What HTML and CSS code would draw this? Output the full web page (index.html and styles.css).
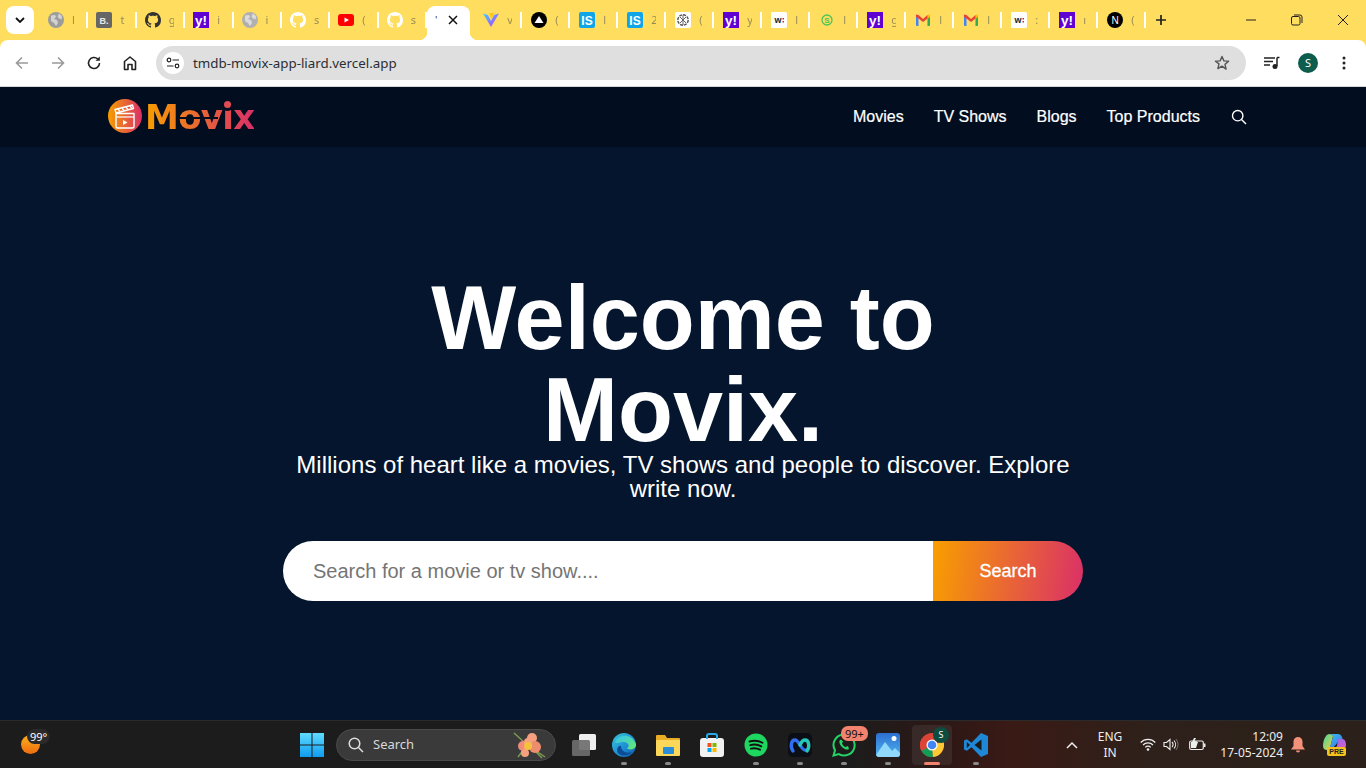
FILE: index.html
```html
<!DOCTYPE html>
<html lang="en">
<head>
<meta charset="utf-8">
<title>Movix</title>
<link rel="stylesheet" href="styles.css">
</head>
<body>
<svg class="defs" width="0" height="0" aria-hidden="true">
  <defs>
    <linearGradient id="logoGrad" x1="0" y1="0" x2="1" y2="0"><stop offset="0" stop-color="#f89e00"/><stop offset="1" stop-color="#da2f68"/></linearGradient>
    <linearGradient id="viteGrad" x1="0" y1="0" x2="1" y2="1"><stop offset="0" stop-color="#41d1ff"/><stop offset="1" stop-color="#bd34fe"/></linearGradient>
    <linearGradient id="edgeGrad" x1="0" y1="0" x2="1" y2="1"><stop offset="0" stop-color="#37c6d0"/><stop offset=".55" stop-color="#1f8fd8"/><stop offset="1" stop-color="#0c59a4"/></linearGradient>
    <linearGradient id="edgeGreen" x1="0" y1="0" x2="1" y2="1"><stop offset="0" stop-color="#35c1f1"/><stop offset="1" stop-color="#66eb6e"/></linearGradient>
    <linearGradient id="winGrad" x1="0" y1="0" x2="0" y2="1"><stop offset="0" stop-color="#5fdcff"/><stop offset="1" stop-color="#0f9bf0"/></linearGradient>
    <linearGradient id="sunGrad" x1="0" y1="0" x2="0" y2="1"><stop offset="0" stop-color="#fbb01e"/><stop offset="1" stop-color="#ee6c10"/></linearGradient>
    <linearGradient id="photoGrad" x1="0" y1="0" x2="0" y2="1"><stop offset="0" stop-color="#2c6fd0"/><stop offset="1" stop-color="#4fb3ef"/></linearGradient>
    <linearGradient id="copGreen" x1="0" y1="0" x2="1" y2="1"><stop offset="0" stop-color="#41d7a0"/><stop offset="1" stop-color="#f0d040"/></linearGradient>
    <linearGradient id="copBlue" x1="0" y1="0" x2="1" y2="1"><stop offset="0" stop-color="#3bc0e8"/><stop offset="1" stop-color="#3a6ff0"/></linearGradient>
    <linearGradient id="copPink" x1="0" y1="0" x2="1" y2="1"><stop offset="0" stop-color="#8a6cf0"/><stop offset="1" stop-color="#e05cc8"/></linearGradient>
    <symbol id="i-globe" viewBox="0 0 16 16"><circle cx="8" cy="8" r="8" fill="currentColor"/><path d="M3 3.500 7 3l1 2-2 2 3 1 1 3-2 3-2-3-3-2zM11 1.500l3 2.500-.5 3.500-2.500-1-1.500-2z" fill="#fff" opacity=".55"/></symbol>
    <symbol id="i-boot" viewBox="0 0 16 16"><rect width="16" height="16" rx="2" fill="#666"/><text x="8" y="11.500" class="ic-text" font-size="9" fill="#e8e8e8">B.</text></symbol>
    <symbol id="i-gh" viewBox="0 0 16 16"><path fill="currentColor" d="M8 0C3.58 0 0 3.58 0 8c0 3.54 2.29 6.530 5.470 7.590.4.07.55-.17.55-.38 0-.19-.01-.82-.01-1.490-2.010.37-2.530-.49-2.690-.94-.09-.23-.48-.94-.82-1.130-.28-.15-.68-.52-.01-.53.63-.01 1.080.58 1.230.82.72 1.210 1.870.87 2.330.66.07-.52.28-.87.51-1.070-1.780-.2-3.640-.89-3.640-3.950 0-.87.31-1.590.82-2.150-.08-.2-.36-1.020.08-2.120 0 0 .67-.21 2.200.82.64-.18 1.320-.27 2-.27.68 0 1.360.09 2 .27 1.530-1.040 2.200-.82 2.200-.82.44 1.100.16 1.920.08 2.120.51.56.82 1.270.82 2.150 0 3.070-1.870 3.750-3.650 3.950.29.25.54.73.54 1.480 0 1.070-.01 1.930-.01 2.200 0 .21.15.46.55.38A8.013 8.013 0 0016 8c0-4.420-3.580-8-8-8z"/></symbol>
    <symbol id="i-yahoo" viewBox="0 0 16 16"><rect width="16" height="16" fill="#5f01d1"/><text x="8" y="12.500" class="ic-text" font-size="13.500" fill="#fff">y!</text></symbol>
    <symbol id="i-yt" viewBox="0 0 16 16"><rect y="2" width="16" height="12" rx="3" fill="#f00"/><path d="M6.500 5.500v5L11 8z" fill="#fff"/></symbol>
    <symbol id="i-vite" viewBox="0 0 16 16"><path d="M0 1.500 8 15 16 1.500 11 3 8 9 5 3z" fill="url(#viteGrad)"/><path d="M6 1h5L8.500 7z" fill="#ffc517"/></symbol>
    <symbol id="i-tri" viewBox="0 0 16 16"><circle cx="8" cy="8" r="8" fill="#000"/><path d="M8 4l4.500 7h-9z" fill="#fff"/></symbol>
    <symbol id="i-is" viewBox="0 0 16 16"><rect width="16" height="16" rx="2" fill="#0ea5e9"/><text x="8" y="12.500" class="ic-text" font-size="12" fill="#fff">IS</text></symbol>
    <symbol id="i-ai" viewBox="0 0 16 16"><rect width="16" height="16" rx="2" fill="#fff"/><circle cx="8" cy="8" r="5.200" fill="none" stroke="#555" stroke-width="1.400" stroke-dasharray="3 1"/><path d="M5 5l6 6M11 5l-6 6M8 3v10" stroke="#666" stroke-width="1"/></symbol>
    <symbol id="i-w" viewBox="0 0 16 16"><rect width="16" height="16" rx="1.500" fill="#fff"/><text x="7" y="11" class="ic-text" font-size="9" fill="#222">w</text><rect x="11.500" y="6" width="1.500" height="1.500" fill="#d22"/><rect x="11.500" y="9" width="1.500" height="1.500" fill="#d22"/></symbol>
    <symbol id="i-s" viewBox="0 0 16 16"><circle cx="8" cy="8" r="5" fill="none" stroke="#4cc35a" stroke-width="1.300"/><text x="8" y="11" class="ic-text" font-size="8" fill="#4cc35a">S</text></symbol>
    <symbol id="i-gmail" viewBox="0 0 16 16"><path d="M1 14V4l2.500 2v8H2a1 1 0 0 1-1-1z" fill="#4285f4"/><path d="M12.500 14V6L15 4v9a1 1 0 0 1-1 1z" fill="#34a853"/><path d="M12.500 3 15 2.500V5l-2.500 2z" fill="#fbbc04"/><path d="M1 2.500 3.500 3 8 7l4.500-4v3.500L8 10 3.500 6.500 1 5z" fill="#ea4335"/></symbol>
    <symbol id="i-next" viewBox="0 0 16 16"><circle cx="8" cy="8" r="8" fill="#000"/><text x="8" y="11.500" class="ic-thin" font-size="10" fill="#fff">N</text></symbol>
  </defs>
</svg>

<div class="browser">
  <div class="tabstrip">
    <button class="tabsearch"><svg width="10" height="6" viewBox="0 0 10 6"><path d="M1 1l4 4 4-4" fill="none" stroke="#111" stroke-width="1.800"/></svg></button>
    <div class="tabs tabs-first">
      <div class="tab"><svg class="fav gray-a"><use href="#i-globe"/></svg><span class="clip">l</span></div>
      <div class="tab"><svg class="fav"><use href="#i-boot"/></svg><span class="clip">t</span></div>
      <div class="tab"><svg class="fav dark"><use href="#i-gh"/></svg><span class="clip">g</span></div>
      <div class="tab"><svg class="fav"><use href="#i-yahoo"/></svg><span class="clip">i</span></div>
      <div class="tab"><svg class="fav gray-b"><use href="#i-globe"/></svg><span class="clip">i</span></div>
      <div class="tab"><svg class="fav white"><use href="#i-gh"/></svg><span class="clip">s</span></div>
      <div class="tab"><svg class="fav"><use href="#i-yt"/></svg><span class="clip">(</span></div>
      <div class="tab"><svg class="fav white"><use href="#i-gh"/></svg><span class="clip">s</span></div>
    </div>
    <div class="tab-active"><span class="active-title">'</span><svg class="tabclose" width="10" height="10" viewBox="0 0 10 10"><path d="M1 1l8 8M9 1l-8 8" stroke="#111" stroke-width="1.500"/></svg></div>
    <div class="tabs tabs-second">
      <div class="tab"><svg class="fav"><use href="#i-vite"/></svg><span class="clip">v</span></div>
      <div class="tab"><svg class="fav"><use href="#i-tri"/></svg><span class="clip">(</span></div>
      <div class="tab"><svg class="fav"><use href="#i-is"/></svg><span class="clip">l</span></div>
      <div class="tab"><svg class="fav"><use href="#i-is"/></svg><span class="clip">2</span></div>
      <div class="tab"><svg class="fav"><use href="#i-ai"/></svg><span class="clip">(</span></div>
      <div class="tab"><svg class="fav"><use href="#i-yahoo"/></svg><span class="clip">y</span></div>
      <div class="tab"><svg class="fav"><use href="#i-w"/></svg><span class="clip">l</span></div>
      <div class="tab"><svg class="fav"><use href="#i-s"/></svg><span class="clip">l</span></div>
      <div class="tab"><svg class="fav"><use href="#i-yahoo"/></svg><span class="clip">g</span></div>
      <div class="tab"><svg class="fav"><use href="#i-gmail"/></svg><span class="clip">l</span></div>
      <div class="tab"><svg class="fav"><use href="#i-gmail"/></svg><span class="clip">l</span></div>
      <div class="tab"><svg class="fav"><use href="#i-w"/></svg><span class="clip">:</span></div>
      <div class="tab"><svg class="fav"><use href="#i-yahoo"/></svg><span class="clip">ı</span></div>
      <div class="tab"><svg class="fav"><use href="#i-next"/></svg><span class="clip">(</span></div>
    </div>
    <button class="newtab"><svg width="12" height="12" viewBox="0 0 12 12"><path d="M6 1v10M1 6h10" stroke="#222" stroke-width="1.700"/></svg></button>
    <div class="winctrls">
      <span class="winbtn"><svg width="12" height="12" viewBox="0 0 12 12"><path d="M1 6h10" stroke="#222"/></svg></span>
      <span class="winbtn"><svg width="12" height="12" viewBox="0 0 12 12"><rect x=".5" y="2.500" width="8.500" height="8.500" rx="1.500" fill="none" stroke="#222"/><path d="M3 1h6a2 2 0 0 1 2 2v6" fill="none" stroke="#222"/></svg></span>
      <span class="winbtn"><svg width="12" height="12" viewBox="0 0 12 12"><path d="M1 1l10 10M11 1L1 11" stroke="#222"/></svg></span>
    </div>
  </div>

  <div class="toolbar">
    <span class="toolbtn"><svg width="16" height="16" viewBox="0 0 16 16"><path d="M14 8H2.500M8 2.500 2.500 8 8 13.500" fill="none" stroke="#9a9a9a" stroke-width="1.600"/></svg></span>
    <span class="toolbtn"><svg width="16" height="16" viewBox="0 0 16 16"><path d="M2 8h11.500M8 2.500 13.500 8 8 13.500" fill="none" stroke="#9a9a9a" stroke-width="1.600"/></svg></span>
    <span class="toolbtn"><svg width="16" height="16" viewBox="0 0 16 16"><path d="M13.500 8A5.500 5.500 0 1 1 11.800 4" fill="none" stroke="#222" stroke-width="1.600"/><path d="M13.800 1.500v4.300H9.500z" fill="#222"/></svg></span>
    <span class="toolbtn"><svg width="16" height="16" viewBox="0 0 16 16"><path d="M2.500 14.500V6.500L8 2l5.500 4.500v8H10v-5H6v5z" fill="none" stroke="#222" stroke-width="1.600" stroke-linejoin="round"/></svg></span>
    <div class="omnibox">
      <span class="siteinfo"><svg width="14" height="12" viewBox="0 0 14 12"><circle cx="3" cy="3" r="1.800" fill="none" stroke="#222" stroke-width="1.200"/><path d="M6.500 3H13M1 9h6.500" stroke="#222" stroke-width="1.200"/><circle cx="11" cy="9" r="1.800" fill="none" stroke="#222" stroke-width="1.200"/></svg></span>
      <span class="url">tmdb-movix-app-liard.vercel.app</span>
      <svg class="star" width="16" height="16" viewBox="0 0 16 16"><path d="M8 1.500l1.900 4.400 4.700.4-3.600 3.100 1.100 4.700L8 11.100l-4.100 2.500L5 8.900 1.400 6.300l4.700-.4z" fill="none" stroke="#555" stroke-width="1.400" stroke-linejoin="round"/></svg>
    </div>
    <div class="toolright">
      <span class="toolbtn"><svg width="16" height="14" viewBox="0 0 16 14"><path d="M0 2h11M0 5.500h9M0 9h6" stroke="#222" stroke-width="1.500"/><path d="M13 1.500h2.500M13 1.500V10" stroke="#222" stroke-width="1.500"/><circle cx="11" cy="10.500" r="2.500" fill="#222"/></svg></span>
      <span class="toolbtn"><span class="avatar">S</span></span>
      <span class="toolbtn"><svg width="4" height="14" viewBox="0 0 4 14"><circle cx="2" cy="2" r="1.500" fill="#222"/><circle cx="2" cy="7" r="1.500" fill="#222"/><circle cx="2" cy="12" r="1.500" fill="#222"/></svg></span>
    </div>
  </div>

  <main class="page">
    <header class="site-header">
      <div class="site-inner">
        <a class="brand">
          <svg class="brand-mark" width="34" height="34" viewBox="0 0 34 34">
            <circle cx="17" cy="17" r="17" fill="url(#logoGrad)"/>
            <path d="M7 10.500 24.500 6l1 3.500L8 14zM8 14.500h18v13a1.500 1.500 0 0 1-1.500 1.500h-15A1.500 1.500 0 0 1 8 27.500z" fill="none" stroke="#fff" stroke-width="1.400" stroke-linejoin="round"/>
            <path d="M10 10l2 2.500M14 9l2 2.500M18 8l2 2.500M22 7l2 2.500" stroke="#fff" stroke-width="1.400"/>
            <path d="M8 18h18" stroke="#fff" stroke-width="1.200"/>
            <path d="M15 21v5l4.500-2.500z" fill="#fff"/>
          </svg>
          <span class="brand-word">Movix</span>
        </a>
        <nav class="site-nav">
          <a class="nav-link">Movies</a>
          <a class="nav-link">TV Shows</a>
          <a class="nav-link">Blogs</a>
          <a class="nav-link">Top Products</a>
          <a class="nav-link nav-search"><svg width="16" height="16" viewBox="0 0 16 16"><circle cx="6.700" cy="6.700" r="5.200" fill="none" stroke="#fff" stroke-width="1.400"/><path d="M10.500 10.500 15 15" stroke="#fff" stroke-width="1.400"/></svg></a>
        </nav>
      </div>
    </header>
    <section class="hero">
      <h1 class="hero-title">Welcome to<br>Movix.</h1>
      <p class="hero-sub">Millions of heart like a movies, TV shows and people to discover. Explore write now.</p>
      <div class="hero-search">
        <span class="hero-input">Search for a movie or tv show....</span>
        <button class="hero-btn">Search</button>
      </div>
    </section>
  </main>

  <footer class="taskbar">
    <div class="tb-left">
      <span class="weather">
        <svg width="19" height="19" viewBox="0 0 19 19"><circle cx="9.500" cy="9.500" r="9.500" fill="url(#sunGrad)"/></svg>
        <span class="temp">99°</span>
      </span>
    </div>
    <div class="tb-center">
      <span class="tb-start"><svg width="24" height="24" viewBox="0 0 24 24"><path d="M0 0h11.500v11.500H0zM12.500 0H24v11.500H12.500zM0 12.500h11.500V24H0zM12.500 12.500H24V24H12.500z" fill="url(#winGrad)"/></svg></span>
      <div class="tb-search">
        <svg width="16" height="16" viewBox="0 0 16 16"><circle cx="6.500" cy="6.500" r="5.300" fill="none" stroke="#ddd" stroke-width="1.500"/><path d="M10.500 10.500 15 15" stroke="#ddd" stroke-width="1.500"/></svg>
        <span class="tb-search-text">Search</span>
        <svg class="tb-flowers" width="34" height="28" viewBox="0 0 34 28"><path d="M2 2l10 9M33 26 20 17M30 27l-8-8M6 26l6-8" stroke="#7c9a52" stroke-width="1.500"/><circle cx="20" cy="7" r="5" fill="#f6a07f"/><circle cx="11" cy="15" r="5" fill="#f08a7a"/><circle cx="23" cy="16" r="6" fill="#ee8c6e"/><circle cx="13" cy="22" r="4" fill="#f6a07f"/><circle cx="16" cy="11" r="4" fill="#f6a07f"/><circle cx="16" cy="15" r="4" fill="#f5c23d"/></svg>
      </div>
      <div class="tb-apps">
        <span class="app app-task"><svg width="26" height="24" viewBox="0 0 26 24"><rect x="8" y="1" width="17" height="16" rx="1.500" fill="#eee"/><rect x="1" y="7" width="18" height="16" rx="1.500" fill="#6e6e6e" opacity=".92"/></svg></span>
        <span class="app run"><svg width="24" height="24" viewBox="0 0 24 24"><circle cx="12" cy="12" r="12" fill="url(#edgeGrad)"/><path d="M3 9C6 1 20 0 24 11c1 5-7 7-9 4 3-1 2-6-4-6-4 0-6 2-8 0z" fill="url(#edgeGreen)"/><path d="M9 13c0 5 5 8 11 6-3 4-10 5-14 1-2-3 0-8 3-7z" fill="#0b4d94"/></svg></span>
        <span class="app run"><svg width="24" height="22" viewBox="0 0 24 22"><path d="M0 2a1 1 0 0 1 1-1h8l2 3h12a1 1 0 0 1 1 1v16H0z" fill="#e9ae25"/><rect y="6" width="24" height="16" rx="1" fill="#fcd75a"/><rect x="7" y="13" width="11" height="7" rx="1" fill="#2a8fd8"/></svg></span>
        <span class="app"><svg width="24" height="24" viewBox="0 0 24 24"><rect y="5" width="24" height="19" rx="3" fill="#f1f1f1"/><path d="M7 6V3a2 2 0 0 1 2-2h6a2 2 0 0 1 2 2v3" fill="none" stroke="#28a8ea" stroke-width="2"/><path d="M7.500 10h4v4h-4z" fill="#f25022"/><path d="M12.500 10h4v4h-4z" fill="#7fba00"/><path d="M7.500 15h4v4h-4z" fill="#00a4ef"/><path d="M12.500 15h4v4h-4z" fill="#ffb900"/></svg></span>
        <span class="app run"><svg width="24" height="24" viewBox="0 0 24 24"><circle cx="12" cy="12" r="11.500" fill="#1ed760"/><path d="M5.500 8.500c4-1.200 9-1 13 1.300M6.300 12.200c3.500-1 7.500-.8 11 1.200M7 15.700c3-.8 6-.6 9 1" fill="none" stroke="#111" stroke-width="1.900" stroke-linecap="round"/></svg></span>
        <span class="app run"><svg width="24" height="24" viewBox="0 0 24 24"><rect width="24" height="24" rx="5" fill="#0b0e14"/><path d="M5 18c-3-4-2-11 2-11s6 10 10 10" fill="none" stroke="#2f6ef0" stroke-width="3.400" stroke-linecap="round"/><path d="M19 18c3-4 2-11-2-11-3 0-4 3-5 5" fill="none" stroke="#26c6b9" stroke-width="3.400" stroke-linecap="round"/></svg></span>
        <span class="app run"><svg width="24" height="24" viewBox="0 0 24 24"><path d="M12 1.500a10.500 10.500 0 0 0-9 15.800L1.500 22.500l5.400-1.400A10.500 10.500 0 1 0 12 1.500z" fill="none" stroke="#25d366" stroke-width="2"/><path d="M8 7c-1.500 2 0 5 2 7s5 3.500 7 2l-1-3-2.500 1c-1.500-.5-3-2-3.500-3.500l1-2-2-2z" fill="#25d366"/></svg><span class="badge">99+</span></span>
        <span class="app run"><svg width="24" height="24" viewBox="0 0 24 24"><rect width="24" height="24" rx="3" fill="url(#photoGrad)"/><path d="M0 22 9 9l7 9 3-3 5 5v1a3 3 0 0 1-3 3H2z" fill="#8fd8fb"/><circle cx="18" cy="5.500" r="2.500" fill="#fff"/></svg></span>
        <span class="app active"><svg width="24" height="24" viewBox="0 0 24 24"><circle cx="12" cy="12" r="12" fill="#db4437"/><path d="M12 12 1.600 18A12 12 0 0 1 1.600 6z" fill="#db4437"/><path d="M12 12 1.600 18A12 12 0 0 0 13 24z" fill="#0f9d58"/><path d="M12 12 23.500 8.500A12 12 0 0 1 13 24z" fill="#fcc934"/><circle cx="12" cy="12" r="5.500" fill="#fff"/><circle cx="12" cy="12" r="4.300" fill="#4285f4"/></svg><span class="mini-avatar">S</span></span>
        <span class="app run"><svg width="24" height="24" viewBox="0 0 24 24"><path d="M17 0 7.500 9.800 2.800 6.200 0 7.600v8.800l2.800 1.400 4.700-3.600L17 24l7-3V3z" fill="#1e88d6"/><path d="M17.500 6.500 10.500 12l7 5.500z" fill="#1a1a1a"/><path d="M2.800 9v6L6 12z" fill="#1a1a1a"/></svg></span>
      </div>
    </div>
    <div class="tb-right">
      <span class="tray-chev"><svg width="12" height="8" viewBox="0 0 12 8"><path d="M1 7l5-5 5 5" fill="none" stroke="#eee" stroke-width="1.500"/></svg></span>
      <span class="tray-lang">ENG<br>IN</span>
      <span class="tray-ic tray-wifi"><svg width="16" height="13" viewBox="0 0 16 13"><path d="M.7 4.500a10 10 0 0 1 14.600 0M3 7a7 7 0 0 1 10 0M5.300 9.300a3.500 3.500 0 0 1 5.400 0" fill="none" stroke="#eee" stroke-width="1.200"/><circle cx="8" cy="11.500" r="1.300" fill="#eee"/></svg></span>
      <span class="tray-ic"><svg width="16" height="13" viewBox="0 0 16 13"><path d="M1 4.500h2.500L7 1.500v10l-3.500-3H1z" fill="none" stroke="#eee" stroke-width="1.100"/><path d="M9 4a3.500 3.500 0 0 1 0 5M11 2.500a6 6 0 0 1 0 8" fill="none" stroke="#eee" stroke-width="1.100"/><path d="M13 1a8.500 8.500 0 0 1 0 11" fill="none" stroke="#777" stroke-width="1"/></svg></span>
      <span class="tray-ic tray-batt"><svg width="17" height="13" viewBox="0 0 17 13"><rect x=".7" y="3" width="13.600" height="8.500" rx="1.500" fill="none" stroke="#eee" stroke-width="1.200"/><path d="M15 5.500h1.500v3.500H15z" fill="#eee"/><path d="M2 4h7L7 10H2z" fill="#eee"/><path d="M5 0 3 4h3l-1 3 3-4H5.500L7 0z" fill="#eee"/></svg></span>
      <span class="tray-clock"><span>12:09</span><span>17-05-2024</span></span>
      <span class="tray-bell"><svg width="14" height="16" viewBox="0 0 14 16"><path d="M7 0a4.500 4.500 0 0 1 4.500 4.500V9L14 12.500H0L2.500 9V4.500A4.500 4.500 0 0 1 7 0z" fill="#f3917a"/><path d="M5 13.500h4a2 2 0 0 1-4 0z" fill="#f3917a"/></svg></span>
      <span class="tray-copilot"><svg width="24" height="23" viewBox="0 0 24 23"><path d="M7 1C3 2 1 8 1 13c0 3 2 4 4 4l3-2L11 3c0-1-2-2-4-2z" fill="url(#copGreen)"/><path d="M7 1h9c2 0 3 1 4 3l1 4-5 1-5 6-3-1 3-10c0-2-2-3-4-3z" fill="url(#copBlue)"/><path d="M16 6h4c3 0 4 3 4 6 0 3-2 5-5 5h-8l4-4z" fill="url(#copPink)"/><rect x="5" y="14" width="19" height="9" rx="2" fill="#f6c21c"/><text x="14.500" y="21" class="pre-text">PRE</text></svg></span>
    </div>
  </footer>
</div>
</body>
</html>
```
FILE: styles.css
```css
* { box-sizing: border-box; }
html, body { margin: 0; padding: 0; height: 100%; overflow: hidden; }
body { font-family: "Liberation Sans", Arial, sans-serif; background: #ffdd5e; }
.defs { display: block; height: 0; }
button { border: 0; padding: 0; font: inherit; }
.ic-text { font-family: "Liberation Sans", sans-serif; font-weight: 700; text-anchor: middle; }
.ic-thin { font-family: "Liberation Sans", sans-serif; font-weight: 400; text-anchor: middle; }
.browser { height: 768px; display: flex; flex-direction: column; }

/* tab strip */
.tabstrip { height: 40px; flex: none; display: flex; align-items: center; background: #ffdd5e; padding-left: 6px; }
.tabsearch { width: 28px; height: 28px; border-radius: 8px; background: #fff; display: flex; align-items: center; justify-content: center; margin-top: -1px; }
.tabs { display: flex; }
.tabs-first { margin-left: 5px; }
.tabs-second { margin-left: 3px; }
.tab { width: 48px; height: 16px; padding-left: 9px; display: flex; align-items: center; gap: 8px; position: relative; }
.tabs-first .tab { width: 48.4px; }
.tabs-second .tab { padding-left: 10px; }
.tab::after { content: ""; position: absolute; right: -1px; top: 0; width: 2px; height: 16px; background: #fff; }
.fav { width: 16px; height: 16px; flex: none; display: block; }
.gray-a { color: #9c9c9c; }
.gray-b { color: #b0b0b0; }
.dark { color: #333; }
.white { color: #fff; }
.clip { width: 5px; overflow: hidden; font-family: "Noto Sans", sans-serif; font-size: 11px; line-height: 16px; color: #555; opacity: .6; }
.tab-active { width: 43px; height: 34px; margin-left: 1px; margin-top: 6px; background: #fff; border-radius: 8px 8px 0 0; position: relative; display: flex; align-items: center; padding: 0 0 6px 8px; }
.tab-active::before, .tab-active::after { content: ""; position: absolute; bottom: 0; width: 8px; height: 8px; }
.tab-active::before { left: -8px; background: radial-gradient(circle at 0 0, transparent 8px, #fff 8.500px); }
.tab-active::after { right: -8px; background: radial-gradient(circle at 100% 0, transparent 8px, #fff 8.500px); }
.active-title { width: 5px; font-size: 10px; color: #333; overflow: hidden; }
.tabclose { margin-left: 8px; }
.newtab { width: 26px; height: 26px; margin-left: 3px; background: transparent; display: flex; align-items: center; justify-content: center; }
.winctrls { margin-left: auto; display: flex; align-self: stretch; }
.winbtn { width: 46px; display: flex; align-items: center; justify-content: center; }

/* toolbar */
.toolbar { height: 47px; flex: none; background: #fff; border-radius: 8px 8px 0 0; border-bottom: 1px solid #d6d6d6; display: flex; align-items: center; padding-left: 4px; }
.toolbtn { width: 36px; height: 36px; display: flex; align-items: center; justify-content: center; flex: none; }
.omnibox { width: 1090px; height: 34px; margin-left: 8px; background: #dfdfdf; border-radius: 17px; display: flex; align-items: center; padding: 0 16px 0 6px; flex: none; margin-top: -1px; }
.siteinfo { width: 22px; height: 22px; border-radius: 50%; background: #fff; display: flex; align-items: center; justify-content: center; flex: none; }
.url { margin-left: 9px; font-family: "Noto Sans", sans-serif; font-size: 13.33px; color: #2a2d33; }
.star { margin-left: auto; }
.toolright { display: flex; margin-left: 8px; }
.avatar { width: 20px; height: 20px; border-radius: 50%; background: #0d5c4d; color: #fff; font: 11px/20px "Noto Sans", sans-serif; text-align: center; }

/* page */
.page { flex: 1; min-height: 0; background: #04152d; display: flex; flex-direction: column; overflow: hidden; }
.site-header { height: 60px; flex: none; background: #020d1f; }
.site-inner { width: 1200px; height: 60px; margin: 0 auto; padding: 0 20px; display: flex; align-items: center; justify-content: space-between; }
.brand { display: flex; align-items: center; padding-left: 5px; gap: 3px; margin-top: -3px; }
.brand-mark { display: block; }
.brand-word { position: relative; display: block; margin-top: 3px; font-family: "DejaVu Sans", sans-serif; font-weight: 700; font-size: 34px; letter-spacing: -.7px; line-height: 40px; background: linear-gradient(90deg, #f89e00, #da2f68); -webkit-background-clip: text; background-clip: text; color: transparent; }
.brand-word::after { content: ""; position: absolute; left: 33px; top: 20px; width: 40px; height: 2px; background: #020d1f; }
.brand-word::before { content: ""; position: absolute; left: 79px; top: 4px; width: 7px; height: 7px; border-radius: 50%; background: #e24a55; box-shadow: 0 0 0 3px #020d1f; }
.site-nav { display: flex; align-items: center; }
.nav-link { padding: 0 15px; font-size: 16px; font-weight: 500; color: #fff; line-height: 60px; -webkit-text-stroke: .2px #fff; }
.nav-search { display: flex; align-items: center; height: 60px; padding: 0 16px; }

.hero { display: flex; flex-direction: column; align-items: center; text-align: center; padding-top: 125px; color: #fff; }
.hero-title { margin: 0 0 -3px; font-size: 90px; font-weight: 700; line-height: 92px; }
.hero-sub { margin: 0 0 40px; width: 800px; font-size: 24px; font-weight: 500; line-height: 24px; }
.hero-search { width: 800px; height: 60px; display: flex; }
.hero-input { flex: 1; background: #fff; border-radius: 30px 0 0 30px; padding-left: 30px; text-align: left; font-size: 20px; line-height: 60px; color: #757575; }
.hero-btn { width: 150px; height: 60px; border-radius: 0 30px 30px 0; background: linear-gradient(98.37deg, #f89e00 .99%, #da2f68 100%); color: #fff; font-size: 18px; -webkit-text-stroke: .3px #fff; }

/* taskbar */
.taskbar { height: 48px; flex: none; display: grid; grid-template-columns: 296px 1fr auto; align-items: center; border-top: 1px solid #2b2b2b; color: #eee; font-family: "Noto Sans", sans-serif; background: linear-gradient(90deg, #1c1c1c 0, #1c1c1c 62%, #2f1815 70%, #3a1a15 74%, #2e201a 84%, #2b211a 100%); }
.tb-left { padding-left: 21px; }
.weather { display: block; width: 40px; height: 30px; position: relative; padding-top: 5px; }
.temp { position: absolute; left: 6px; top: -1px; padding: 0 3px; border-radius: 8px; background: #2a2a2a; font-size: 11px; line-height: 15px; color: #fff; }
.tb-center { display: flex; align-items: center; }
.tb-start { width: 32px; display: flex; justify-content: center; }
.tb-search { width: 220px; height: 32px; margin-left: 8px; border-radius: 16px; background: #3a3a3a; border: 1px solid #4a4a4a; display: flex; align-items: center; padding-left: 11px; }
.tb-search-text { margin: -2px 0 0 9px; font-size: 13px; color: #d8d8d8; }
.tb-flowers { margin-left: auto; margin-right: 9px; }
.tb-apps { display: flex; margin-left: 9px; }
.app { width: 44px; height: 40px; position: relative; display: flex; align-items: center; justify-content: center; }
.app-task { width: 37px; }
.run::after, .active::after { content: ""; position: absolute; bottom: 0; left: 19px; width: 6px; height: 3px; border-radius: 2px; background: #8a8a8a; }
.active { width: 40px; margin: 0 2px; background: rgba(255, 255, 255, .07); border-radius: 4px; }
.active::after { left: 12px; width: 16px; background: #f3836f; }
.badge { position: absolute; left: 19px; top: 1px; padding: 0 4px; height: 15px; border-radius: 7px; background: #f3836f; color: #111; font-size: 11px; line-height: 15px; }
.mini-avatar { position: absolute; right: 3px; top: 2px; width: 16px; height: 16px; border-radius: 50%; background: #0d4d40; color: #fff; font-size: 9px; line-height: 16px; text-align: center; }
.tb-right { display: flex; align-items: center; padding-right: 20px; }
.tray-chev { display: flex; margin-right: 16px; }
.tray-lang { width: 32px; text-align: center; font-size: 12px; line-height: 16px; margin-right: 10px; }
.tray-ic { display: flex; width: 24px; justify-content: center; }
.tray-wifi { width: 23px; }
.tray-batt { margin-left: 2px; }
.tray-clock { display: flex; flex-direction: column; align-items: flex-end; width: 72px; font-size: 12px; line-height: 16px; margin-left: 2px; white-space: nowrap; }
.tray-bell { display: flex; margin-left: 8px; }
.tray-copilot { display: flex; margin-left: 17px; }
.pre-text { font: 700 7px "Liberation Sans", sans-serif; fill: #222; text-anchor: middle; }
```
